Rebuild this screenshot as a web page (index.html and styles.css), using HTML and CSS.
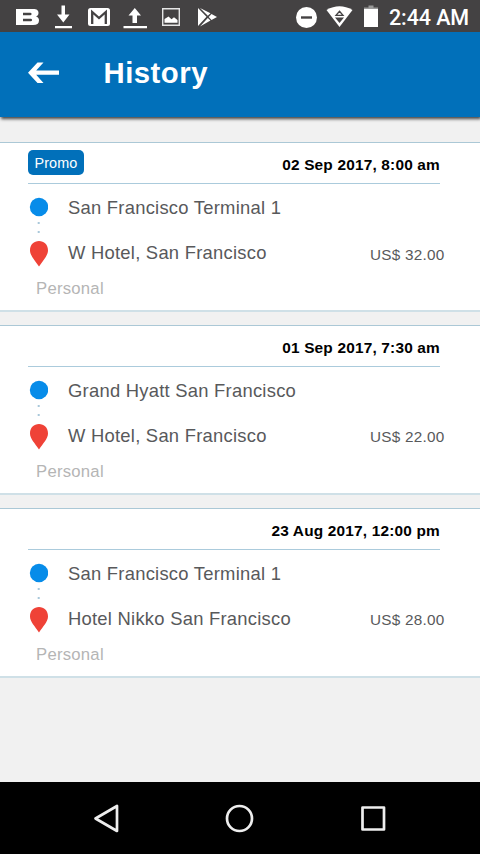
FILE: index.html
```html
<!DOCTYPE html>
<html lang="en">
<head>
<meta charset="utf-8">
<title>History</title>
<link rel="stylesheet" href="styles.css">
</head>
<body>
<div class="screen">
  <div class="status">
    <svg class="status-icons" width="220" height="32" viewBox="0 0 220 32" fill="#fff">
      <path fill-rule="evenodd" d="M16 9H33C37 9 38.500 10.500 38.500 13C38.500 15 37.500 16 36 16.500C38 17 39 18.500 39 20.500C39 23.500 37 25 33 25H16ZM23 12.800V15.200H30.500C32 15.200 32 12.800 30.500 12.800ZM23 18.800V21.200H31C32.500 21.200 32.500 18.800 31 18.800Z"/>
      <path d="M61.500 5.500H65V14.500H69.500L63.300 22.500L57 14.500H61.500ZM55 26H72V28.300H55Z"/>
      <rect x="88" y="8" width="22" height="18" rx="2.500"/>
      <path fill="none" stroke="#444243" stroke-width="2.300" d="M92.200 24V12L99 18L105.800 12V24"/>
      <path d="M134.800 8L141 15.500H137V23H132.500V15.500H128.500ZM123.500 26H147V28.300H123.500Z"/>
      <path fill="none" stroke="#e5e5e5" stroke-width="1.400" d="M162.700 8.700H179.300V25.300H162.700Z"/>
      <path d="M164.500 22.700V19L167 17.500L168.500 16.500L171.500 19.200L174 17.300L177.500 20V22.700Z"/>
      <path d="M198 8L206.500 16.800L198 26ZM200 8L210.500 13.300L207.800 15.800ZM200 26.500L207.800 18L210.500 20.500ZM211.500 14L217 17L211.500 20L208.700 17Z"/>
    </svg>
    <div class="status-right">
      <svg width="88" height="32" viewBox="0 0 88 32">
        <circle cx="14.500" cy="17.500" r="10.500" fill="#fff"/>
        <path fill="#444243" d="M9 16.300H20V18.700H9Z"/>
        <path fill="#fff" d="M34.500 10Q47.500 2.500 60.500 10L47.500 27Z"/>
        <path fill="none" stroke="#444243" stroke-width="1.300" d="M47.500 11.300L51 15.300H44Z"/>
        <path fill="#444243" d="M43 17.500H52L47.500 23Z"/>
        <path fill="#999" d="M76.500 5.500H81.500V7.500H86V9H72V7.500H76.500Z"/>
        <path fill="#fff" d="M72 9H86V27H72Z"/>
      </svg>
      <span class="clock">2:44 AM</span>
    </div>
  </div>
  <header class="appbar">
    <svg class="back" width="32" height="22" viewBox="0 0 32 22" fill="#fff"><path d="M9.500 .5H15.500L8.200 8.500H31V12.700H8.200L15.500 21H9.500L0 10.700Z"/></svg>
    <h1>History</h1>
  </header>
  <main>
    <article class="trip">
      <div class="trip-head"><span class="promo">Promo</span><time>02 Sep 2017, 8:00 am</time></div>
      <div class="route">
        <svg width="20" height="70" viewBox="0 0 20 70"><circle cx="11" cy="10" r="9.200" fill="#078ce9"/><path fill="#a9c8da" d="M9.700 25h2v2h-2zM9.700 34h2v2h-2z"/><path fill="#ef4237" d="M2 53.500C2 47.500 6 44 11 44C16 44 20 47.500 20 53.500C20 58.500 15 63.500 11 69.500C7 63.500 2 58.500 2 53.500Z"/></svg>
        <div class="stops"><div class="place">San Francisco Terminal 1</div><div class="place">W Hotel, San Francisco</div></div>
        <span class="price first">US$ 32.00</span>
      </div>
      <div class="profile">Personal</div>
    </article>
    <article class="trip">
      <div class="trip-head"><time>01 Sep 2017, 7:30 am</time></div>
      <div class="route">
        <svg width="20" height="70" viewBox="0 0 20 70"><circle cx="11" cy="10" r="9.200" fill="#078ce9"/><path fill="#a9c8da" d="M9.700 25h2v2h-2zM9.700 34h2v2h-2z"/><path fill="#ef4237" d="M2 53.500C2 47.500 6 44 11 44C16 44 20 47.500 20 53.500C20 58.500 15 63.500 11 69.500C7 63.500 2 58.500 2 53.500Z"/></svg>
        <div class="stops"><div class="place">Grand Hyatt San Francisco</div><div class="place">W Hotel, San Francisco</div></div>
        <span class="price">US$ 22.00</span>
      </div>
      <div class="profile">Personal</div>
    </article>
    <article class="trip">
      <div class="trip-head"><time>23 Aug 2017, 12:00 pm</time></div>
      <div class="route">
        <svg width="20" height="70" viewBox="0 0 20 70"><circle cx="11" cy="10" r="9.200" fill="#078ce9"/><path fill="#a9c8da" d="M9.700 25h2v2h-2zM9.700 34h2v2h-2z"/><path fill="#ef4237" d="M2 53.500C2 47.500 6 44 11 44C16 44 20 47.500 20 53.500C20 58.500 15 63.500 11 69.500C7 63.500 2 58.500 2 53.500Z"/></svg>
        <div class="stops"><div class="place">San Francisco Terminal 1</div><div class="place">Hotel Nikko San Francisco</div></div>
        <span class="price">US$ 28.00</span>
      </div>
      <div class="profile">Personal</div>
    </article>
  </main>
  <nav class="navbar">
    <svg width="30" height="30" viewBox="0 0 30 30"><path d="M4.500 15.500L26 3V28Z"/></svg>
    <svg width="30" height="30" viewBox="0 0 30 30"><circle cx="14.500" cy="15.500" r="12.500"/></svg>
    <svg width="30" height="30" viewBox="0 0 30 30"><path d="M3.500 4.500H25V26.500H3.500Z"/></svg>
  </nav>
</div>
</body>
</html>
```

FILE: styles.css
```css
* { box-sizing: border-box; }
body { margin: 0; font-family: "Liberation Sans", Arial, sans-serif; }
svg { display: block; flex: none; }
.screen {
  width: 480px;
  height: 854px;
  display: flex;
  flex-direction: column;
  background: #f1f1f1;
  overflow: hidden;
}
.status {
  height: 32px;
  flex: none;
  display: flex;
  justify-content: space-between;
  background: #444243;
}
.status-right { display: flex; width: 188px; }
.clock {
  margin-left: 9px;
  font: 500 21.5px/36px Roboto, sans-serif;
  letter-spacing: -.1px;
  color: #fff;
  white-space: nowrap;
}
.appbar {
  height: 85px;
  flex: none;
  display: flex;
  align-items: flex-start;
  padding: 30px 28px 0;
  background: #0170ba;
  box-shadow: 1px 2px 3px #444;
}
h1 {
  margin: -6px 0 0 43.5px;
  font-size: 29.3px;
  line-height: 34px;
  letter-spacing: .5px;
  color: #fff;
}
main {
  flex: 1;
  padding-top: 25px;
  display: flex;
  flex-direction: column;
  gap: 13px;
}
.trip {
  height: 170px;
  flex: none;
  background: #fff;
  border-top: 1px solid #abc8d6;
  border-bottom: 2px solid #cfe0e7;
  white-space: nowrap;
}
.trip-head {
  height: 41px;
  margin: 0 40px 0 28px;
  padding-top: 7px;
  display: flex;
  border-bottom: 1px solid #abcbdc;
}
.promo {
  width: 56px;
  height: 25px;
  border-radius: 5px;
  background: #0170ba;
  color: #fff;
  font-size: 14.4px;
  line-height: 26px;
  letter-spacing: .1px;
  padding-left: 6.5px;
}
time {
  margin-left: auto;
  font-size: 15.4px;
  font-weight: bold;
  line-height: 30px;
  letter-spacing: .19px;
  color: #000;
}
.route { display: flex; height: 85px; padding: 13px 0 0 28px; }
.stops { margin-left: 20px; flex: 1; }
.place {
  height: 45px;
  font-size: 18.4px;
  line-height: 22px;
  letter-spacing: .25px;
  color: #58595b;
}
.price {
  width: 110px;
  padding-top: 46px;
  font-size: 15.3px;
  line-height: 22px;
  letter-spacing: .25px;
  color: #58595b;
}
.price.first { padding-top: 47px; }
.profile {
  margin-left: 36px;
  font-size: 16.7px;
  line-height: 40px;
  letter-spacing: .25px;
  color: #b5b5b5;
}
.navbar {
  height: 72px;
  flex: none;
  display: flex;
  justify-content: space-between;
  padding: 21px 91px 0;
  background: #000;
}
.navbar svg { fill: none; stroke: #eee; stroke-width: 2.700; stroke-linejoin: round; }
```
